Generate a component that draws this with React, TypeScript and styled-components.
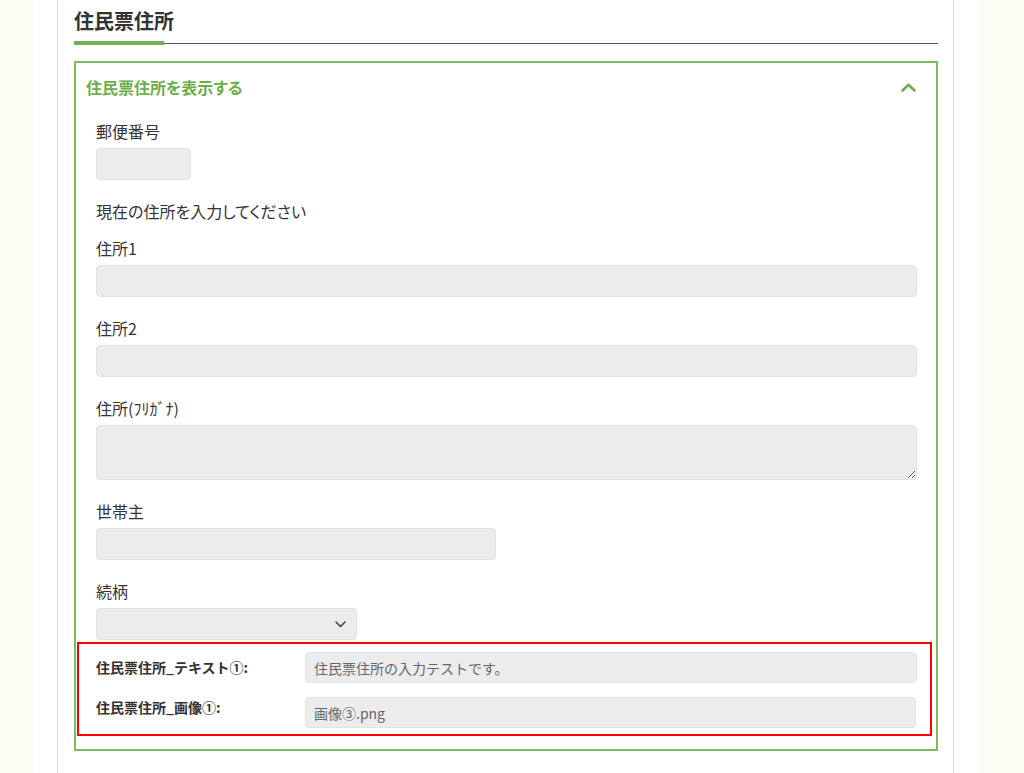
import React from "react";
import styled, { createGlobalStyle } from "styled-components";

const GlobalStyle = createGlobalStyle`
  html, body {
    margin: 0;
    padding: 0;
    background: #f9fdf3;
    font-family: "Noto Sans CJK JP", "Noto Sans", sans-serif;
    color: #333;
  }
  * { box-sizing: border-box; }
`;

const Page = styled.div`
  margin-left: 33px;
  width: 945px;
  min-height: 100vh;
  background: #fff;
  padding: 0 24px;
  display: flex;
`;

const Card = styled.div`
  width: 897px;
  border-left: 1px solid #dcdcdc;
  border-right: 1px solid #dcdcdc;
  padding: 0 15px 20px 16px;
`;

const Title = styled.h2`
  margin: 0;
  padding-top: 6px;
  font-size: 20px;
  line-height: 30px;
  font-weight: 700;
  color: #333;
`;

const TitleRule = styled.div`
  display: flex;
  align-items: center;
  margin-top: 5px;
`;

const GreenBar = styled.div`
  width: 90px;
  height: 4px;
  background: #72b051;
`;

const DarkLine = styled.div`
  flex: 1;
  height: 1px;
  background: #555a60;
`;

const Panel = styled.section`
  margin-top: 16px;
  border: 2px solid #7fbc5e;
`;

const PanelHeader = styled.div`
  display: flex;
  align-items: center;
  justify-content: space-between;
  padding: 12px 20px 12px 10px;
  font-size: 16px;
  line-height: 24px;
  font-weight: 700;
  color: #6dad4a;
  font-feature-settings: "palt";
`;

const PanelBody = styled.div`
  padding: 8px 19px 13px 20px;
`;

const Field = styled.div<{ $last?: boolean }>`
  margin-bottom: ${(p) => (p.$last ? 0 : 19)}px;
`;

const Label = styled.div`
  font-size: 16px;
  line-height: 24px;
  color: #333;
  margin-bottom: 5px;
`;

const Note = styled.div`
  font-size: 16px;
  line-height: 24px;
  color: #333;
  margin-bottom: 13px;
  font-feature-settings: "palt";
`;

const TextInput = styled.input<{ $w?: number }>`
  display: block;
  width: ${(p) => (p.$w ? `${p.$w}px` : "100%")};
  height: 32px;
  background: #ececec;
  border: 1px solid #e3e3e3;
  border-radius: 4px;
  padding: 0 8px;
  font-family: inherit;
  font-size: 14px;
  color: #666;
  outline: none;
`;

const TextArea = styled.textarea`
  display: block;
  width: 100%;
  height: 55px;
  background: #ececec;
  border: 1px solid #e3e3e3;
  border-radius: 4px;
  padding: 6px 8px;
  font-family: inherit;
  font-size: 14px;
  resize: vertical;
  outline: none;
`;

const SelectWrap = styled.div`
  position: relative;
  width: 261px;
`;

const Select = styled.select`
  display: block;
  width: 100%;
  height: 32px;
  appearance: none;
  background: #ececec;
  border: 1px solid #e3e3e3;
  border-radius: 4px;
  font-family: inherit;
  font-size: 14px;
  outline: none;
`;

const SelectIcon = styled.svg`
  position: absolute;
  right: 11px;
  top: 13px;
  pointer-events: none;
`;

const Highlight = styled.div`
  margin: 2px -15px 0 -19px;
  border: 2px solid #ff0000;
  padding: 8px 13px 6px 17px;
  display: flex;
  flex-direction: column;
  gap: 14px;
`;

const Row = styled.div`
  display: flex;
  align-items: flex-start;
`;

const RowLabel = styled.div<{ $top: number }>`
  width: 209px;
  flex: none;
  padding-top: ${(p) => p.$top}px;
  font-size: 14px;
  line-height: 20px;
  font-weight: 700;
  color: #333;
`;

const RowInput = styled(TextInput)<{ $inset?: number }>`
  flex: 1;
  height: 31px;
  padding: 0 8px;
  margin-right: ${(p) => p.$inset ?? 0}px;
`;

export default function App() {
  return (
    <>
      <GlobalStyle />
      <Page>
        <Card>
          <Title>住民票住所</Title>
          <TitleRule>
            <GreenBar />
            <DarkLine />
          </TitleRule>
          <Panel>
            <PanelHeader>
              <span>住民票住所を表示する</span>
              <svg width="15" height="9" viewBox="0 0 15 9" fill="none">
                <path d="M1.5 7.5 L7.5 1.8 L13.5 7.5" stroke="#6dad4a" strokeWidth="2.6" strokeLinecap="round" strokeLinejoin="round" />
              </svg>
            </PanelHeader>
            <PanelBody>
              <Field>
                <Label>郵便番号</Label>
                <TextInput $w={95} readOnly value="" />
              </Field>
              <Note>現在の住所を入力してください</Note>
              <Field>
                <Label>住所1</Label>
                <TextInput readOnly value="" />
              </Field>
              <Field>
                <Label>住所2</Label>
                <TextInput readOnly value="" />
              </Field>
              <Field>
                <Label>住所(ﾌﾘｶﾞﾅ)</Label>
                <TextArea readOnly value="" />
              </Field>
              <Field>
                <Label>世帯主</Label>
                <TextInput $w={400} readOnly value="" />
              </Field>
              <Field $last>
                <Label>続柄</Label>
                <SelectWrap>
                  <Select defaultValue="">
                    <option value=""></option>
                  </Select>
                  <SelectIcon width="11" height="7" viewBox="0 0 11 7" fill="none">
                    <path d="M1 1 L5.5 5.5 L10 1" stroke="#444" strokeWidth="1.6" strokeLinecap="round" strokeLinejoin="round" />
                  </SelectIcon>
                </SelectWrap>
              </Field>
              <Highlight>
                <Row>
                  <RowLabel $top={5}>住民票住所_テキスト①:</RowLabel>
                  <RowInput readOnly value="住民票住所の入力テストです。" />
                </Row>
                <Row>
                  <RowLabel $top={0}>住民票住所_画像①:</RowLabel>
                  <RowInput $inset={1} readOnly value="画像③.png" />
                </Row>
              </Highlight>
            </PanelBody>
          </Panel>
        </Card>
      </Page>
    </>
  );
}
